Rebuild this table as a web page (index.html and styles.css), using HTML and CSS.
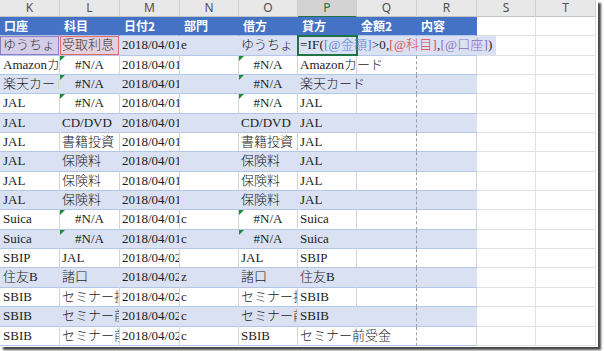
FILE: index.html
```html
<!DOCTYPE html>
<html lang="ja">
<head>
<meta charset="utf-8">
<title>Sheet</title>
<link rel="stylesheet" href="styles.css">
</head>
<body>
<div class="frame">
  <div class="sheet">
    <div class="cols">
      <div class="ch">K</div><div class="ch">L</div><div class="ch">M</div><div class="ch">N</div><div class="ch">O</div><div class="ch sel">P</div><div class="ch">Q</div><div class="ch">R</div><div class="ch">S</div><div class="ch">T</div><div class="ch end"></div>
    </div>

    <div class="row thead">
      <div class="c">口座</div><div class="c">科目</div><div class="c">日付2</div><div class="c">部門</div><div class="c">借方</div><div class="c">貸方</div><div class="c">金額2</div><div class="c">内容</div><div class="c x"></div><div class="c x"></div><div class="c end"></div>
    </div>

    <div class="row band">
      <div class="c k hk">ゆうちょ</div><div class="c hl">受取利息</div><div class="c">2018/04/01</div><div class="c n">e</div><div class="c">ゆうちょ</div><div class="c p"></div><div class="c q"></div><div class="c"></div><div class="c x"></div><div class="c x"></div><div class="c end"></div>
    </div>
    <div class="row">
      <div class="c k">Amazonカード</div><div class="c err">#N/A</div><div class="c">2018/04/01</div><div class="c n"></div><div class="c err">#N/A</div><div class="c p">Amazonカード</div><div class="c q"></div><div class="c"></div><div class="c x"></div><div class="c x"></div><div class="c end"></div>
    </div>
    <div class="row band">
      <div class="c k">楽天カード</div><div class="c err">#N/A</div><div class="c">2018/04/01</div><div class="c n"></div><div class="c err">#N/A</div><div class="c p">楽天カード</div><div class="c q"></div><div class="c"></div><div class="c x"></div><div class="c x"></div><div class="c end"></div>
    </div>
    <div class="row">
      <div class="c k">JAL</div><div class="c err">#N/A</div><div class="c">2018/04/01</div><div class="c n"></div><div class="c err">#N/A</div><div class="c p">JAL</div><div class="c q"></div><div class="c"></div><div class="c x"></div><div class="c x"></div><div class="c end"></div>
    </div>
    <div class="row band">
      <div class="c k">JAL</div><div class="c">CD/DVD</div><div class="c">2018/04/01</div><div class="c n"></div><div class="c">CD/DVD</div><div class="c p">JAL</div><div class="c q"></div><div class="c"></div><div class="c x"></div><div class="c x"></div><div class="c end"></div>
    </div>
    <div class="row">
      <div class="c k">JAL</div><div class="c">書籍投資</div><div class="c">2018/04/01</div><div class="c n"></div><div class="c">書籍投資</div><div class="c p">JAL</div><div class="c q"></div><div class="c"></div><div class="c x"></div><div class="c x"></div><div class="c end"></div>
    </div>
    <div class="row band">
      <div class="c k">JAL</div><div class="c">保険料</div><div class="c">2018/04/01</div><div class="c n"></div><div class="c">保険料</div><div class="c p">JAL</div><div class="c q"></div><div class="c"></div><div class="c x"></div><div class="c x"></div><div class="c end"></div>
    </div>
    <div class="row">
      <div class="c k">JAL</div><div class="c">保険料</div><div class="c">2018/04/01</div><div class="c n"></div><div class="c">保険料</div><div class="c p">JAL</div><div class="c q"></div><div class="c"></div><div class="c x"></div><div class="c x"></div><div class="c end"></div>
    </div>
    <div class="row band">
      <div class="c k">JAL</div><div class="c">保険料</div><div class="c">2018/04/01</div><div class="c n"></div><div class="c">保険料</div><div class="c p">JAL</div><div class="c q"></div><div class="c"></div><div class="c x"></div><div class="c x"></div><div class="c end"></div>
    </div>
    <div class="row">
      <div class="c k">Suica</div><div class="c err">#N/A</div><div class="c">2018/04/01</div><div class="c n">c</div><div class="c err">#N/A</div><div class="c p">Suica</div><div class="c q"></div><div class="c"></div><div class="c x"></div><div class="c x"></div><div class="c end"></div>
    </div>
    <div class="row band">
      <div class="c k">Suica</div><div class="c err">#N/A</div><div class="c">2018/04/01</div><div class="c n">c</div><div class="c err">#N/A</div><div class="c p">Suica</div><div class="c q"></div><div class="c"></div><div class="c x"></div><div class="c x"></div><div class="c end"></div>
    </div>
    <div class="row">
      <div class="c k">SBIP</div><div class="c">JAL</div><div class="c">2018/04/02</div><div class="c n"></div><div class="c">JAL</div><div class="c p">SBIP</div><div class="c q"></div><div class="c"></div><div class="c x"></div><div class="c x"></div><div class="c end"></div>
    </div>
    <div class="row band">
      <div class="c k">住友B</div><div class="c">諸口</div><div class="c">2018/04/02</div><div class="c n">z</div><div class="c">諸口</div><div class="c p">住友B</div><div class="c q"></div><div class="c"></div><div class="c x"></div><div class="c x"></div><div class="c end"></div>
    </div>
    <div class="row">
      <div class="c k">SBIB</div><div class="c">セミナー投資</div><div class="c">2018/04/02</div><div class="c n">c</div><div class="c">セミナー投資</div><div class="c p">SBIB</div><div class="c q"></div><div class="c"></div><div class="c x"></div><div class="c x"></div><div class="c end"></div>
    </div>
    <div class="row band">
      <div class="c k">SBIB</div><div class="c">セミナー前受金</div><div class="c">2018/04/02</div><div class="c n">c</div><div class="c">セミナー前受金</div><div class="c p">SBIB</div><div class="c q"></div><div class="c"></div><div class="c x"></div><div class="c x"></div><div class="c end"></div>
    </div>
    <div class="row">
      <div class="c k">SBIB</div><div class="c">セミナー前受金</div><div class="c">2018/04/02</div><div class="c n">c</div><div class="c">SBIB</div><div class="c p">セミナー前受金</div><div class="c q"></div><div class="c"></div><div class="c x"></div><div class="c x"></div><div class="c end"></div>
    </div>

    <div class="cursor"></div>
    <div class="editor">=IF(<span class="rb">[@金額]</span>&gt;0,<span class="rr">[@科目]</span>,<span class="rp">[@口座]</span>)</div>
  </div>
</div>
</body>
</html>
```

FILE: styles.css
```css
* { box-sizing: border-box; margin: 0; padding: 0; }
html, body { background: #fff; }
body { width: 604px; height: 351px; overflow: hidden; }

.frame {
  width: 598px;
  height: 347px;
  overflow: hidden;
  background: #fff;
  box-shadow: 3px 3px 2px rgba(0, 0, 0, 0.72);
}

.sheet {
  position: relative;
  font-family: "Liberation Serif", "Noto Sans CJK JP", serif;
  font-size: 13px;
  font-weight: 300;
  color: #1c1c1c;
}

.cols, .row {
  display: grid;
  grid-template-columns: 60px 60px 60px 59px 59px 59px 60px 60px 59px 60px 1fr;
}

.cols {
  height: 17px;
  background: #e8e8e8;
  border-bottom: 1px solid #c4c4c4;
  font-family: "Noto Sans", "Liberation Sans", sans-serif;
  font-size: 12px;
  font-weight: 400;
  color: #505050;
}
.ch {
  border-right: 1px solid #d0d0d0;
  text-align: center;
  line-height: 16px;
}
.ch.sel {
  background: #d3d3d3;
  color: #217346;
  border-bottom: 2px solid #217346;
}
.ch.end { border-right: 0; background: #fff; }

.row { height: 19.35px; }

.c {
  overflow: hidden;
  white-space: nowrap;
  padding-left: 2px;
  line-height: 18px;
  border-right: 1px solid #d4d4d4;
  border-bottom: 1px solid #b4c6e7;
}
.c.k { padding-left: 3px; }
.c.n { padding-left: 1px; }
.c.q { border-right: 1px dashed #9e9e9e; }
.c.p { overflow: visible; position: relative; z-index: 1; }

.band .c { background: #d9e1f2; border-right-color: #d9e1f2; }
.band .c.q { border-right: 1px dashed #9e9e9e; }

.c.x, .band .c.x {
  background: #fff;
  border-right: 1px solid #e1e1e1;
  border-bottom: 1px solid #e1e1e1;
}
.c.end, .band .c.end { background: #fff; border: 0; }

.thead .c {
  background: #4472c4;
  border-right-color: #4472c4;
  color: #fff;
  font-family: "Noto Sans CJK JP", "Noto Sans", sans-serif;
  font-weight: 700;
  font-size: 12px;
  padding-left: 4px;
  line-height: 18px;
}
.thead .c.x { background: #fff; border-right: 1px solid #e1e1e1; border-bottom: 1px solid #e1e1e1; }
.thead .c.end { background: #fff; border: 0; }

.err { position: relative; text-align: center; padding-left: 0; }
.err::before {
  content: "";
  position: absolute;
  left: 0;
  top: 0;
  border-top: 5px solid #1e8a3a;
  border-right: 5px solid transparent;
}

.band .c.hk {
  background: #d4cde8;
  box-shadow: inset 0 0 0 1px #8d7cc4;
  color: #333;
}
.band .c.hl {
  background: #e3d2de;
  box-shadow: inset 0 0 0 1px #e06a6a;
  color: #333;
}

.cursor {
  position: absolute;
  left: 297px;
  top: 35px;
  width: 61px;
  height: 21px;
  border: 2px solid #217346;
  z-index: 2;
}

.editor {
  position: absolute;
  left: 298px;
  top: 36px;
  width: 198px;
  height: 19px;
  padding-left: 2px;
  line-height: 18px;
  letter-spacing: 0.2px;
  background: linear-gradient(to right, transparent 0, transparent 60px, #d9e1f2 60px);
  white-space: nowrap;
  z-index: 3;
  color: #1c1c1c;
}
.rb { color: #5b84d6; }
.rr { color: #e04848; }
.rp { color: #8a6cc4; }
```
